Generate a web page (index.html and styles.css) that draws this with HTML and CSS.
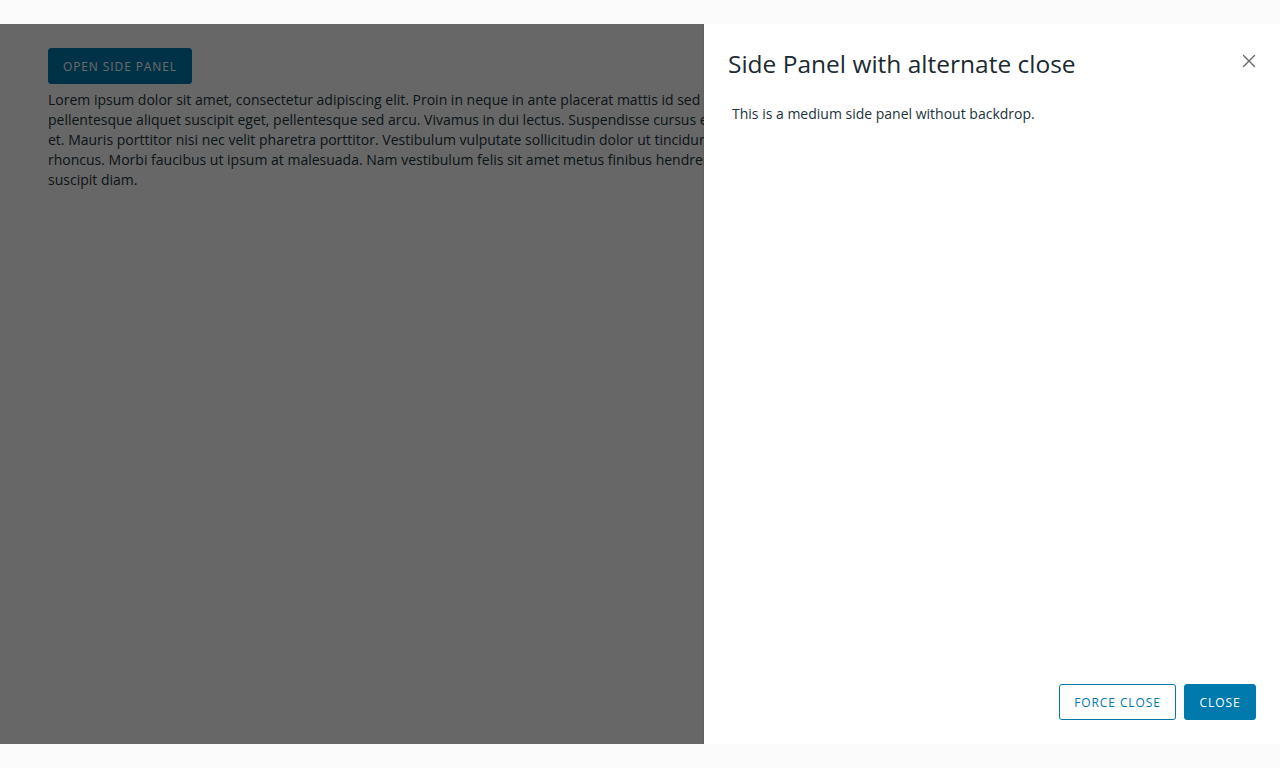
FILE: index.html
```html
<!DOCTYPE html>
<html lang="en">
<head>
<meta charset="utf-8">
<title>Side Panel</title>
<link rel="stylesheet" href="styles.css">
</head>
<body>
<div class="stage">
  <main class="content">
    <button class="btn btn-primary">Open side panel</button>
    <p class="lorem">Lorem ipsum dolor sit amet, consectetur adipiscing elit. Proin in neque in ante placerat mattis id sed quam.<br>pellentesque aliquet suscipit eget, pellentesque sed arcu. Vivamus in dui lectus. Suspendisse cursus est ac<br>et. Mauris porttitor nisi nec velit pharetra porttitor. Vestibulum vulputate sollicitudin dolor ut tincidunt.<br>rhoncus. Morbi faucibus ut ipsum at malesuada. Nam vestibulum felis sit amet metus finibus hendrerit.<br>suscipit diam.</p>
  </main>
  <div class="overlay"></div>
  <aside class="panel">
    <header class="panel-header">
      <h3 class="panel-title">Side Panel with alternate close</h3>
      <button class="panel-close" aria-label="Close">
        <svg width="16" height="16" viewBox="0 0 16 16"><path d="M2.5 2.5 L13.5 13.5 M13.5 2.5 L2.5 13.5" stroke="#666" stroke-width="1.4" fill="none" stroke-linecap="round"/></svg>
      </button>
    </header>
    <div class="panel-body">
      <p>This is a medium side panel without backdrop.</p>
    </div>
    <footer class="panel-footer">
      <button class="btn btn-outline">Force close</button>
      <button class="btn btn-primary">Close</button>
    </footer>
  </aside>
</div>
</body>
</html>
```

FILE: styles.css
```css
* { box-sizing: border-box; }
html, body { margin: 0; padding: 0; }
body {
  background: #fafbfa;
  font-family: "Open Sans", "Liberation Sans", sans-serif;
  color: #21333b;
}
.stage {
  position: relative;
  margin: 24px 0;
  height: 720px;
  background: #fafbfa;
  overflow: hidden;
}
.content {
  width: 704px;
  height: 100%;
  overflow: hidden;
  padding: 24px 0 24px 48px;
}
.btn {
  display: inline-flex;
  align-items: center;
  justify-content: center;
  height: 36px;
  padding: 0 12px;
  border-radius: 3px;
  font-family: inherit;
  font-size: 12px;
  font-weight: 500;
  letter-spacing: 0.9px;
  text-transform: uppercase;
  cursor: pointer;
  white-space: nowrap;
}
.btn-primary {
  background: #0079ad;
  color: #fff;
  border: 1px solid #0079ad;
}
.btn-outline {
  background: #fff;
  color: #0079ad;
  border: 1px solid #0079ad;
}
.content .btn { margin: 0 0 6px 0; width: 144px; }
.lorem {
  margin: 0;
  font-size: 14px;
  line-height: 20px;
  white-space: nowrap;
  overflow: hidden;
  color: #21333b;
}
.overlay {
  position: absolute;
  inset: 0;
  background: rgba(0, 0, 0, 0.59);
}
.panel {
  position: absolute;
  top: 0;
  right: 0;
  bottom: 0;
  width: 576px;
  background: #fff;
  box-shadow: 0 1px 3px rgba(0,0,0,0.18);
  padding: 24px;
  display: flex;
  flex-direction: column;
}
.panel-header {
  display: flex;
  align-items: flex-start;
  justify-content: space-between;
}
.panel-title {
  margin: 0;
  font-size: 24.5px;
  line-height: 32px;
  font-weight: 400;
  color: #1b2a32;
}
.panel-close {
  border: 0;
  background: transparent;
  padding: 0;
  margin: 5px -1px 0 0;
  width: 16px;
  height: 16px;
  cursor: pointer;
}
.panel-close svg { display: block; }
.panel-body {
  flex: 1;
  padding: 24px 4px 0;
}
.panel-body p {
  margin: 0;
  font-size: 14px;
  line-height: 20px;
}
.panel-footer {
  display: flex;
  justify-content: flex-end;
  gap: 8px;
}
.panel-footer .btn-outline { width: 117px; }
.panel-footer .btn-primary { width: 72px; }
```
